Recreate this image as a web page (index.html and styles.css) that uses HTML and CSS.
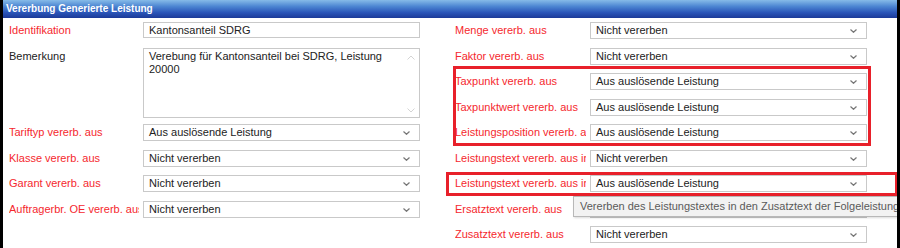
FILE: index.html
```html
<!DOCTYPE html>
<html lang="de">
<head>
    <meta charset="UTF-8">
    <title>Vererbung Generierte Leistung</title>
    <link rel="stylesheet" href="styles.css">
</head>
<body>
    <div class="frame">
        <div class="header">Vererbung Generierte Leistung</div>

        <div class="form">
            <!-- Left column -->
            <div class="col col-left">
                <div class="row">
                    <span class="label req">Identifikation</span>
                    <div class="field">Kantonsanteil SDRG</div>
                </div>
                <div class="row row-tall">
                    <span class="label">Bemerkung</span>
                    <div class="field memo">
                        <div class="memo-text">Verebung für Kantonsanteil bei SDRG, Leistung 20000</div>
                        <div class="memo-scroll">
                            <svg width="8" height="5" viewBox="0 0 8 5"><path d="M0.5 4.5 L4 1 L7.5 4.5" fill="none" stroke="#d4d4d4" stroke-width="1"/></svg>
                            <svg width="8" height="5" viewBox="0 0 8 5"><path d="M0.5 0.5 L4 4 L7.5 0.5" fill="none" stroke="#d4d4d4" stroke-width="1"/></svg>
                        </div>
                    </div>
                </div>
                <div class="row">
                    <span class="label req">Tariftyp vererb. aus</span>
                    <div class="field select">Aus auslösende Leistung<svg class="chev" width="7" height="4" viewBox="0 0 7 4"><path d="M0.5 0.5 L3.5 3.3 L6.5 0.5" fill="none" stroke="#777" stroke-width="1.2"/></svg></div>
                </div>
                <div class="row">
                    <span class="label req">Klasse vererb. aus</span>
                    <div class="field select">Nicht vererben<svg class="chev" width="7" height="4" viewBox="0 0 7 4"><path d="M0.5 0.5 L3.5 3.3 L6.5 0.5" fill="none" stroke="#777" stroke-width="1.2"/></svg></div>
                </div>
                <div class="row">
                    <span class="label req">Garant vererb. aus</span>
                    <div class="field select">Nicht vererben<svg class="chev" width="7" height="4" viewBox="0 0 7 4"><path d="M0.5 0.5 L3.5 3.3 L6.5 0.5" fill="none" stroke="#777" stroke-width="1.2"/></svg></div>
                </div>
                <div class="row">
                    <span class="label req">Auftragerbr. OE vererb. aus</span>
                    <div class="field select">Nicht vererben<svg class="chev" width="7" height="4" viewBox="0 0 7 4"><path d="M0.5 0.5 L3.5 3.3 L6.5 0.5" fill="none" stroke="#777" stroke-width="1.2"/></svg></div>
                </div>
            </div>

            <!-- Right column -->
            <div class="col col-right">
                <div class="row">
                    <span class="label req">Menge vererb. aus</span>
                    <div class="field select">Nicht vererben<svg class="chev" width="7" height="4" viewBox="0 0 7 4"><path d="M0.5 0.5 L3.5 3.3 L6.5 0.5" fill="none" stroke="#777" stroke-width="1.2"/></svg></div>
                </div>
                <div class="row">
                    <span class="label req">Faktor vererb. aus</span>
                    <div class="field select">Nicht vererben<svg class="chev" width="7" height="4" viewBox="0 0 7 4"><path d="M0.5 0.5 L3.5 3.3 L6.5 0.5" fill="none" stroke="#777" stroke-width="1.2"/></svg></div>
                </div>
                <div class="row">
                    <span class="label req">Taxpunkt vererb. aus</span>
                    <div class="field select">Aus auslösende Leistung<svg class="chev" width="7" height="4" viewBox="0 0 7 4"><path d="M0.5 0.5 L3.5 3.3 L6.5 0.5" fill="none" stroke="#777" stroke-width="1.2"/></svg></div>
                </div>
                <div class="row">
                    <span class="label req">Taxpunktwert vererb. aus</span>
                    <div class="field select">Aus auslösende Leistung<svg class="chev" width="7" height="4" viewBox="0 0 7 4"><path d="M0.5 0.5 L3.5 3.3 L6.5 0.5" fill="none" stroke="#777" stroke-width="1.2"/></svg></div>
                </div>
                <div class="row">
                    <span class="label req">Leistungsposition vererb. aus</span>
                    <div class="field select">Aus auslösende Leistung<svg class="chev" width="7" height="4" viewBox="0 0 7 4"><path d="M0.5 0.5 L3.5 3.3 L6.5 0.5" fill="none" stroke="#777" stroke-width="1.2"/></svg></div>
                </div>
                <div class="row">
                    <span class="label req">Leistungstext vererb. aus in</span>
                    <div class="field select">Nicht vererben<svg class="chev" width="7" height="4" viewBox="0 0 7 4"><path d="M0.5 0.5 L3.5 3.3 L6.5 0.5" fill="none" stroke="#777" stroke-width="1.2"/></svg></div>
                </div>
                <div class="row">
                    <span class="label req">Leistungstext vererb. aus in</span>
                    <div class="field select">Aus auslösende Leistung<svg class="chev" width="7" height="4" viewBox="0 0 7 4"><path d="M0.5 0.5 L3.5 3.3 L6.5 0.5" fill="none" stroke="#777" stroke-width="1.2"/></svg></div>
                </div>
                <div class="row">
                    <span class="label req">Ersatztext vererb. aus</span>
                    <div class="field select">Nicht vererben<svg class="chev" width="7" height="4" viewBox="0 0 7 4"><path d="M0.5 0.5 L3.5 3.3 L6.5 0.5" fill="none" stroke="#777" stroke-width="1.2"/></svg></div>
                </div>
                <div class="row">
                    <span class="label req">Zusatztext vererb. aus</span>
                    <div class="field select">Nicht vererben<svg class="chev" width="7" height="4" viewBox="0 0 7 4"><path d="M0.5 0.5 L3.5 3.3 L6.5 0.5" fill="none" stroke="#777" stroke-width="1.2"/></svg></div>
                </div>
            </div>
        </div>

        <!-- Annotation boxes and tooltip -->
        <div class="mark mark-taxpunkt"></div>
        <div class="mark mark-text"></div>
        <div class="tooltip">Vererben des Leistungstextes in den Zusatztext der Folgeleistung</div>
    </div>
</body>
</html>
```

FILE: styles.css
```css
/* Page */
body {
    margin: 0;
    background: #ffffff;
    font-family: "Liberation Sans", Arial, sans-serif;
    font-size: 11px;
    color: #222222;
    overflow: hidden;
}

.frame {
    position: relative;
    height: 248px;
    border-left: 3px solid #000000;
    border-right: 3px solid #000000;
    box-sizing: border-box;
    overflow: hidden;
}

/* Title bar */
.header {
    height: 18px;
    line-height: 18px;
    padding-left: 3px;
    color: #ffffff;
    font-size: 10px;
    font-weight: bold;
    background: linear-gradient(#86bbe8 0%, #4d86d2 35%, #2a55b8 70%, #1c3a98 100%);
}

/* Form grid */
.form {
    display: grid;
    grid-template-columns: 443px 1fr;
    padding-top: 4px;
}

.col {
    display: flex;
    flex-direction: column;
}

.col-left {
    padding-left: 6px;
}

.col-right {
    padding-left: 9px;
}

.row {
    display: flex;
    align-items: flex-start;
    height: 25.5px;
}

.row-tall {
    height: 76.5px;
}

.label {
    width: 130px;
    margin-right: 4px;
    flex: none;
    height: 16px;
    line-height: 16px;
    white-space: nowrap;
    overflow: hidden;
}

.col-right .label {
    width: 131px;
}

.label.req {
    color: #f5282e;
}

.field {
    position: relative;
    width: 277px;
    height: 16px;
    line-height: 14px;
    padding-left: 5px;
    border: 1px solid #c9c9c9;
    box-sizing: border-box;
    background: #ffffff;
    white-space: nowrap;
}

.select {
    height: 17px;
    line-height: 15px;
}

.chev {
    position: absolute;
    right: 9px;
    top: 6px;
}

/* Remark textarea */
.memo {
    display: flex;
    height: 70px;
    padding-left: 0;
    white-space: normal;
}

.memo-text {
    flex: 1;
    padding: 1px 4px 0 5px;
    line-height: 13px;
}

.memo-scroll {
    width: 16px;
    display: flex;
    flex-direction: column;
    justify-content: space-between;
    align-items: center;
    padding: 6px 0 4px;
}

/* Red annotation marks */
.mark {
    position: absolute;
    border: 3px solid #e8202a;
    box-sizing: border-box;
}

.mark-taxpunkt {
    left: 450px;
    top: 66px;
    width: 418px;
    height: 80px;
}

.mark-text {
    left: 443px;
    top: 172px;
    width: 452px;
    height: 24px;
}

/* Hover tooltip */
.tooltip {
    position: absolute;
    left: 570px;
    top: 196px;
    height: 21px;
    line-height: 19px;
    padding: 0 6px;
    border: 1px solid #b8b8b8;
    box-sizing: border-box;
    background: #f2f2f2;
    color: #5a5a5a;
    white-space: nowrap;
    box-shadow: 1px 1px 2px rgba(0, 0, 0, 0.15);
}
```
